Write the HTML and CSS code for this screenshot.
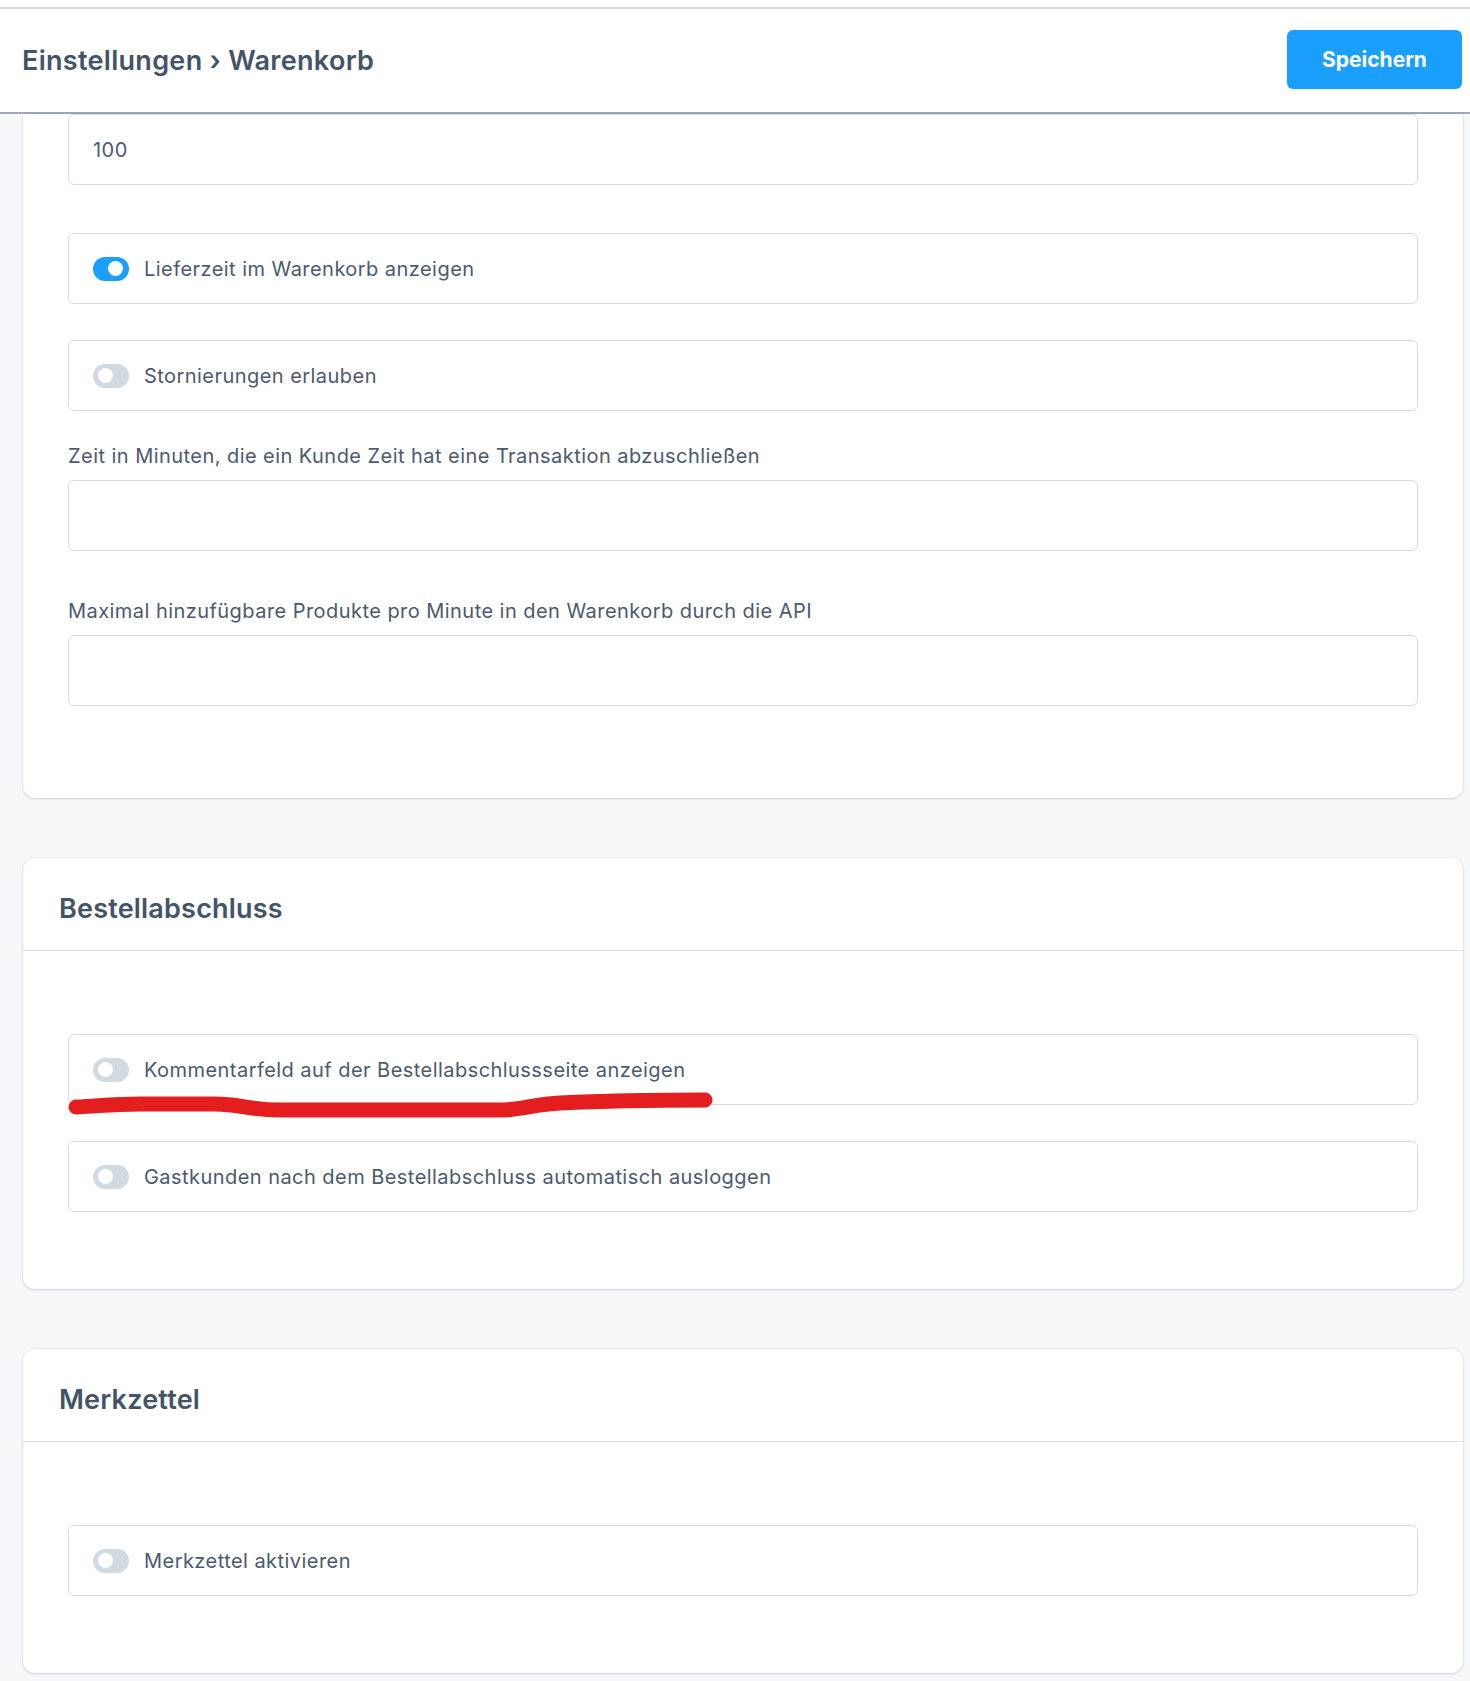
FILE: index.html
```html
<!DOCTYPE html>
<html lang="de">
<head>
<meta charset="utf-8">
<title>Einstellungen › Warenkorb</title>
<link rel="stylesheet" href="styles.css">
</head>
<body>
<div class="topstrip"></div>
<header class="topbar">
  <h1 class="crumb">Einstellungen <span class="sep">›</span> Warenkorb</h1>
  <button class="btn-save">Speichern</button>
</header>
<main class="main">
  <section class="card card-cut">
    <div class="card-body body-first">
      <div class="input-group"><div class="input">100</div></div>
      <div class="toggle-row"><span class="toggle on"></span><span class="toggle-label">Lieferzeit im Warenkorb anzeigen</span></div>
      <div class="toggle-row before-label"><span class="toggle"></span><span class="toggle-label">Stornierungen erlauben</span></div>
      <div class="input-group">
        <label class="field-label">Zeit in Minuten, die ein Kunde Zeit hat eine Transaktion abzuschließen</label>
        <div class="input"></div>
      </div>
      <div class="input-group last-input">
        <label class="field-label">Maximal hinzufügbare Produkte pro Minute in den Warenkorb durch die API</label>
        <div class="input"></div>
      </div>
    </div>
  </section>

  <section class="card">
    <div class="card-header"><h2 class="card-title">Bestellabschluss</h2></div>
    <div class="card-body">
      <div class="toggle-row"><span class="toggle"></span><span class="toggle-label">Kommentarfeld auf der Bestellabschlussseite anzeigen</span></div>
      <div class="toggle-row last-toggle"><span class="toggle"></span><span class="toggle-label">Gastkunden nach dem Bestellabschluss automatisch ausloggen</span></div>
    </div>
  </section>

  <section class="card">
    <div class="card-header"><h2 class="card-title">Merkzettel</h2></div>
    <div class="card-body">
      <div class="toggle-row last-toggle"><span class="toggle"></span><span class="toggle-label">Merkzettel aktivieren</span></div>
    </div>
  </section>
</main>
<svg class="scribble" viewBox="60 1085 660 40" width="660" height="40" aria-hidden="true">
  <path d="M76 1107 C 100 1106, 110 1104, 140 1104 L 215 1104 C 240 1104, 250 1110, 280 1110 L 500 1110 C 520 1110, 535 1104, 560 1103 C 600 1101, 650 1100, 705 1100" fill="none" stroke="#e41e1f" stroke-width="15" stroke-linecap="round" stroke-linejoin="round"/>
</svg>
</body>
</html>
```

FILE: styles.css
```css
* { box-sizing: border-box; }
html, body { margin: 0; padding: 0; }
body {
  background: #f7f8fa;
  font-family: Inter, "Noto Sans", "Liberation Sans", sans-serif;
  color: #4a5a6e;
  position: relative;
  height: 1681px;
  overflow: hidden;
}
.topstrip { height: 7px; background: #fff; }
.topbar {
  background: #fff;
  border-top: 2px solid #d5dbe1;
  border-bottom: 2px solid #9ea9b4;
  height: 107px;
  display: flex;
  align-items: center;
  justify-content: space-between;
  padding: 0 8px 0 22px;
}
.crumb {
  margin: 0;
  font-size: 27px;
  font-weight: 600;
  color: #435468;
  letter-spacing: 0.3px;
}
.sep { font-weight: 600; }
.btn-save {
  width: 175px;
  height: 59px;
  border: 0;
  border-radius: 6px;
  background: #1a9ffe;
  color: #fff;
  font-family: inherit;
  font-size: 21px;
  font-weight: 700;
  margin-top: -2px;
}
.main {
  padding: 0 7px 0 23px;
  display: flex;
  flex-direction: column;
  gap: 60px;
}
.card {
  background: #fff;
  border-radius: 12px;
  box-shadow: 0 1px 3px rgba(30, 40, 60, 0.16), 0 0 0 1px rgba(30, 40, 60, 0.03);
}
.card-cut { border-top-left-radius: 0; border-top-right-radius: 0; }
.card-header {
  padding: 35px 36px 25px;
  border-bottom: 1px solid #d3dae2;
}
.card-title {
  margin: 0;
  font-size: 27px;
  line-height: 32px;
  font-weight: 600;
  color: #435468;
  letter-spacing: 0.2px;
}
.card-body { padding: 83px 45px 0; }
.body-first { padding-top: 0; }
.input-group { margin-bottom: 48px; }
.input-group + .input-group { margin-top: 1px; }
.last-input { margin-bottom: 92px; }
.field-label {
  display: block;
  font-size: 20px;
  line-height: 24px;
  margin-bottom: 12px;
  color: #4a5a6e;
  letter-spacing: 0.45px;
}
.input {
  height: 71px;
  border: 1px solid #d5dce3;
  border-radius: 6px;
  padding: 0 24px;
  display: flex;
  align-items: center;
  font-size: 20px;
  color: #4a5a6e;
  letter-spacing: 0.45px;
}
.toggle-row {
  height: 71px;
  border: 1px solid #d5dce3;
  border-radius: 6px;
  padding: 0 24px;
  display: flex;
  align-items: center;
  gap: 15px;
  margin-bottom: 36px;
}
.before-label { margin-bottom: 33px; }
.last-toggle { margin-bottom: 77px; }
.toggle {
  position: relative;
  width: 36px;
  height: 24px;
  border-radius: 12px;
  background: #d1d9e1;
  flex: none;
}
.toggle::after {
  content: "";
  position: absolute;
  top: 4.5px;
  left: 5px;
  width: 15px;
  height: 15px;
  border-radius: 50%;
  background: #fff;
}
.toggle.on { background: #1a9ffe; }
.toggle.on::after { left: 15px; }
.toggle-label { font-size: 20px; color: #4a5a6e; letter-spacing: 0.45px; }
.scribble {
  position: absolute;
  left: 60px;
  top: 1085px;
  pointer-events: none;
}
```
